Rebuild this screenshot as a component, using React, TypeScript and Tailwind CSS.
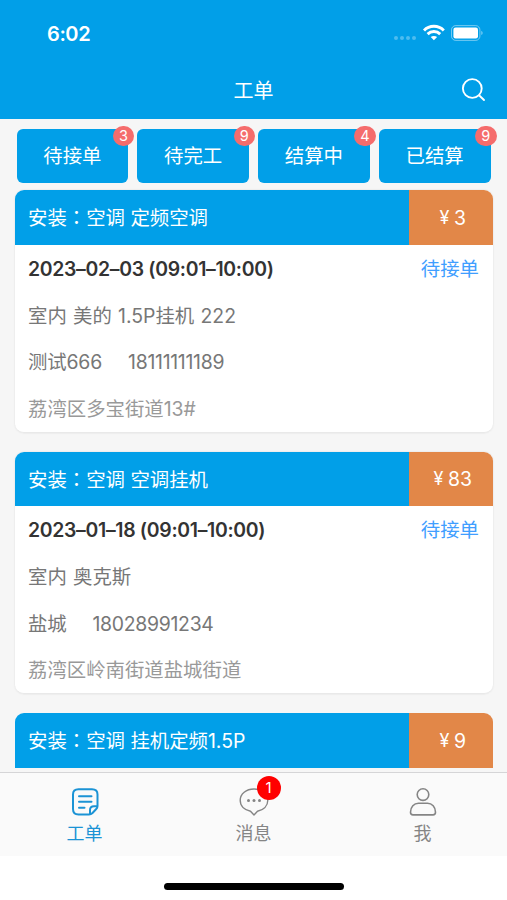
import React from 'react';

type Order = {
  kind: string;
  title: string;
  price: string;
  time: string;
  device: string;
  contact: string;
  phone: string;
  address: string;
};

const filters = [
  { label: '待接单', count: 3 },
  { label: '待完工', count: 9 },
  { label: '结算中', count: 4 },
  { label: '已结算', count: 9 },
];

const orders: Order[] = [
  {
    kind: '空调',
    title: '定频空调',
    price: '3',
    time: '2023–02–03 (09:01–10:00)',
    device: '室内 美的 1.5P挂机 222',
    contact: '测试666',
    phone: '18111111189',
    address: '荔湾区多宝街道13#',
  },
  {
    kind: '空调',
    title: '空调挂机',
    price: '83',
    time: '2023–01–18 (09:01–10:00)',
    device: '室内 奥克斯',
    contact: '盐城',
    phone: '18028991234',
    address: '荔湾区岭南街道盐城街道',
  },
];

function StatusBar() {
  return (
    <div className="flex h-[66px] items-center justify-between pl-[47px] pr-[23px] text-white">
      <span className="pt-[2px] text-[20px] font-semibold leading-6 tracking-[-0.4px]">6:02</span>
      <svg width="91" height="20" viewBox="0 0 91 20" fill="none">
        <g fill="#fff" fillOpacity="0.3">
          <circle cx="3" cy="15" r="2" />
          <circle cx="9" cy="15" r="2" />
          <circle cx="15" cy="15" r="2" />
          <circle cx="21" cy="15" r="2" />
        </g>
        <g stroke="#fff" strokeWidth="2.9">
          <path d="M31 7.4C36.4 1.9 45.4 1.9 50.8 7.4" />
          <path d="M34.6 11.1C38 7.7 43.8 7.7 47.2 11.1" />
        </g>
        <path d="M37.7 14.1C39.4 12.5 42.4 12.5 44.1 14.1L40.9 17.3Z" fill="#fff" />
        <rect x="58.5" y="2.6" width="28.4" height="14.8" rx="4.2" stroke="#fff" strokeOpacity="0.45" />
        <rect x="60.4" y="4.5" width="24.6" height="11" rx="2.2" fill="#fff" />
        <path d="M88.3 7.7c1.8.7 1.8 3.7 0 4.4z" fill="#fff" fillOpacity="0.5" />
      </svg>
    </div>
  );
}

function CardHeader({ kind, title, price }: { kind: string; title: string; price: string }) {
  return (
    <div className="flex h-[54.5px] overflow-hidden rounded-t-[9px] text-white">
      <div className="flex flex-1 items-center whitespace-pre bg-[#019fe8] pl-[13.5px] pt-px">
        <span>
          安装<span className="font-['Noto_Sans_CJK_TC',sans-serif]">：</span>
          {kind} <span>{title}</span>
        </span>
      </div>
      <div className="flex w-[84px] items-center justify-center bg-[#e28748] pt-px">
        <span className="w-[19px] text-center text-[18px]">¥</span>
        <span>{price}</span>
      </div>
    </div>
  );
}

function OrderCard({ order }: { order: Order }) {
  return (
    <article className="h-[242.5px] rounded-[9px] border-b border-[#e9e9e9] bg-white shadow-[0_0_1px_1px_#eeeeee]">
      <CardHeader kind={order.kind} title={order.title} price={order.price} />
      <div className="grid grid-rows-[repeat(4,46.7px)] items-center whitespace-pre px-[13.5px] pt-px text-[#777]">
        <div className="flex items-center justify-between">
          <span className="font-semibold tracking-[-0.3px] text-[#333]">{order.time}</span>
          <span className="text-[#409eff]">待接单</span>
        </div>
        <div className="[word-spacing:0.8px]">{order.device}</div>
        <div className="flex gap-[26px]">
          <span className="tracking-[-0.15px]">{order.contact}</span>
          <span className="tracking-[-0.28px]">{order.phone}</span>
        </div>
        <div className="text-[#999]">{order.address}</div>
      </div>
    </article>
  );
}

function OrdersIcon() {
  return (
    <svg width="28" height="28" viewBox="0 0 28 28" fill="none" stroke="#1b93d5" strokeWidth="2" strokeLinecap="round" strokeLinejoin="round">
      <path d="M26.5 18V6.5Q26.5 1.3 21 1.3H7.5Q2 1.3 2 6.5V21Q2 26.5 7.5 26.5H18Q20 26.5 21.5 25L25 21.3Q26.5 19.7 26.5 18.2H23Q19 18.2 19 22V26.2" />
      <path d="M8 8.2H20.5M8 13.8H20.5M8 19.8H13.5" />
    </svg>
  );
}

function MessageIcon() {
  return (
    <svg width="30" height="28" viewBox="0 0 30 28" fill="none" stroke="#858585" strokeWidth="1.4" strokeLinejoin="round">
      <path d="M15 1C7.2 1 1.2 5.9 1.2 12.3C1.2 18 5.5 22 11.5 23.2L15 27L18.5 23.2C24.5 22 28.8 18 28.8 12.3C28.8 5.9 22.8 1 15 1Z" />
      <g fill="#858585" stroke="none">
        <circle cx="9.5" cy="12.5" r="1.5" />
        <circle cx="15" cy="12.5" r="1.5" />
        <circle cx="20.5" cy="12.5" r="1.5" />
      </g>
    </svg>
  );
}

function PersonIcon() {
  return (
    <svg width="28" height="28" viewBox="0 0 28 28" fill="none" stroke="#858585" strokeWidth="1.6" strokeLinejoin="round">
      <circle cx="14" cy="6.6" r="5.8" />
      <path d="M9.5 15.3H18.5C23 15.3 26.5 19 26.5 24.3Q26.5 26.9 24 26.9H4Q1.5 26.9 1.5 24.3C1.5 19 5 15.3 9.5 15.3Z" />
    </svg>
  );
}

export default function App() {
  return (
    <div className="flex h-[900px] w-[507px] flex-col overflow-hidden bg-white font-[Inter,'Noto_Sans_CJK_SC',sans-serif] text-[19.4px] leading-[28px]">
      <header className="h-[118.5px] shrink-0 bg-[#019fe8] text-white">
        <StatusBar />
        <div className="grid h-[50px] grid-cols-[1fr_auto_1fr] items-center pr-[21px]">
          <span />
          <h1 className="pl-[21px] text-[20px]">工单</h1>
          <svg className="-mt-[3px] justify-self-end" width="25" height="25" viewBox="0 0 25 25" fill="none" stroke="#fff" strokeWidth="1.9" strokeLinecap="round">
            <circle cx="11.3" cy="11.5" r="9.4" />
            <path d="M18.3 18.5L23 23" />
          </svg>
        </div>
      </header>

      <main className="h-[653.5px] shrink-0 overflow-hidden bg-[#f6f6f6] px-[14.5px] pt-[10px]">
        <nav className="ml-[2px] mr-[2px] grid h-[54.5px] grid-cols-4 gap-[9px]">
          {filters.map((f) => (
            <button key={f.label} className="relative rounded-[6px] bg-[#019fe8] pt-px text-white">
              {f.label}
              <span className="absolute -right-[6px] -top-[3px] flex h-[20.5px] w-[21.5px] items-center justify-center rounded-full bg-[#f56c6c] text-[14.5px] leading-5">
                {f.count}
              </span>
            </button>
          ))}
        </nav>
        <div className="mt-[7px] flex flex-col gap-[19px]">
          {orders.map((o) => (
            <OrderCard key={o.phone} order={o} />
          ))}
          <CardHeader kind="空调" title="挂机定频1.5P" price="9" />
        </div>
      </main>

      <footer className="grid h-[84px] shrink-0 grid-cols-3 border-t border-[#d5d5d7] bg-[#fafafa] text-[18px] leading-[26px] text-[#858585]">
        <div className="flex flex-col items-center pt-[14.5px] text-[#1b93d5]">
          <OrdersIcon />
          <span className="mt-[5px]">工单</span>
        </div>
        <div className="flex flex-col items-center pt-[14.5px]">
          <div className="relative">
            <MessageIcon />
            <span className="absolute -right-[12px] -top-[12px] flex h-6 w-6 items-center justify-center rounded-full bg-[#ff0000] text-[15px] text-white">1</span>
          </div>
          <span className="mt-[5px]">消息</span>
        </div>
        <div className="flex flex-col items-center pt-[14.5px]">
          <PersonIcon />
          <span className="mt-[5px]">我</span>
        </div>
      </footer>
      <div className="flex h-[44px] shrink-0 justify-center pl-px pt-[27px]">
        <div className="h-[7px] w-[180px] rounded-full bg-black" />
      </div>
    </div>
  );
}
